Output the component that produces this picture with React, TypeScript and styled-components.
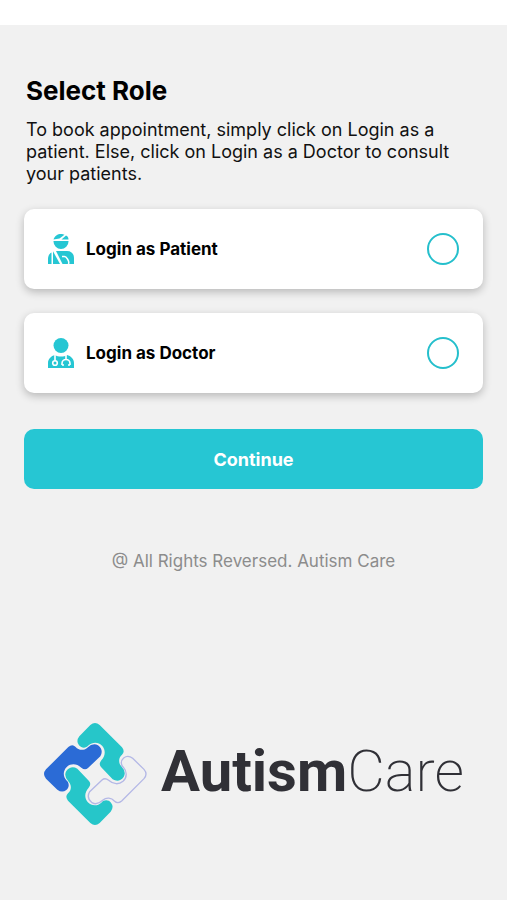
import React, { useState } from "react";
import styled, { createGlobalStyle } from "styled-components";

const GlobalStyle = createGlobalStyle`
  * { box-sizing: border-box; }
  body {
    margin: 0;
    background: #f1f1f1;
    color: #000;
    font-family: Inter, "Liberation Sans", sans-serif;
  }
`;

const StatusStrip = styled.div`
  height: 25px;
  background: #fff;
`;

const Screen = styled.main`
  display: flex;
  flex-direction: column;
  padding: 48px 24px;
`;

const Title = styled.h1`
  margin: 0;
  padding: 0 2px;
  font-size: 26px;
  line-height: 36px;
  font-weight: 700;
`;

const Intro = styled.p`
  margin: 10px 0 24px;
  padding: 0 24px 0 2px;
  font-size: 18px;
  line-height: 22px;
  color: #111;
`;

const RoleList = styled.form`
  display: flex;
  flex-direction: column;
  gap: 24px;
`;

const RoleCard = styled.label`
  display: flex;
  align-items: center;
  gap: 12px;
  height: 80px;
  padding: 0 24px;
  border-radius: 10px;
  background: #fff;
  box-shadow: 0 3px 8px rgba(0, 0, 0, 0.24);
  cursor: pointer;
`;

const RoleName = styled.span`
  flex: 1;
  font-size: 17px;
  line-height: 24px;
  font-weight: 700;
`;

const Radio = styled.input`
  appearance: none;
  width: 32px;
  height: 32px;
  margin: 0;
  border: 2px solid #25bfcc;
  border-radius: 50%;
  &:checked {
    background: #26c6d3;
    box-shadow: inset 0 0 0 5px #fff;
  }
`;

const ContinueButton = styled.button`
  height: 60px;
  margin-top: 12px;
  border: 0;
  border-radius: 10px;
  background: #26c6d3;
  color: #fff;
  font: inherit;
  font-size: 18px;
  font-weight: 700;
`;

const Rights = styled.p`
  margin: 60px 0 0;
  text-align: center;
  font-size: 17px;
  line-height: 24px;
  color: #8c8c8c;
`;

const Brand = styled.footer`
  display: flex;
  align-items: center;
  justify-content: center;
  gap: 14px;
  margin-top: 149px;
`;

const Wordmark = styled.span`
  padding-bottom: 6px;
  font-family: Roboto, "Liberation Sans", sans-serif;
  font-size: 58px;
  line-height: 72px;
  font-weight: 700;
  color: #303036;
`;

const WordmarkLight = styled.span`
  font-weight: 200;
`;

function PatientIcon() {
  return (
    <svg width="26" height="30" viewBox="0 0 26 30" fill="#26c6d3" aria-hidden="true">
      <path d="M5.500 5.500C6.500 2 9.500 0 13 0c1.500 0 2.500.3 3.500.7L11.500 4.500z" />
      <path d="M18 1.500C20 2.500 20.500 4 20.500 5.500h-7z" />
      <path d="M5.500 7h15v.5a7.500 7.500 0 0 1-15 0z" />
      <path d="M3.500 18.500V30H0v-5c0-3 1.300-5.500 3.500-6.500z" />
      <path d="M5 17.300L12 30H5z" />
      <path d="M8 17h11c4.500 0 7 3 7 7v6H14.500z" />
      <path d="M14 22.500h2.500c2 0 2.500 2 3.500 3.500 1 1.500 1 2.500.5 4" fill="none" stroke="#fff" strokeWidth="1.500" />
    </svg>
  );
}

function DoctorIcon() {
  return (
    <svg width="26" height="30" viewBox="0 0 26 30" fill="#26c6d3" aria-hidden="true">
      <circle cx="13" cy="7.500" r="7.500" />
      <path d="M7 17c3 2 9 2 12 0 4 1 7 4 7 8v5H0v-5c0-4 3-7 7-8z" />
      <path
        d="M7 17v6M18 17v4.500M14 27v-1.500a4 4 0 0 1 8 0V27M14 27h2M20 27h2"
        fill="none"
        stroke="#fff"
        strokeWidth="1.600"
      />
      <circle cx="7" cy="25" r="2.300" stroke="#fff" strokeWidth="1.600" />
    </svg>
  );
}

const PIECE =
  "M161 31Q175 19 189 31L256 98Q266 110 256 120C246 128 244 144 254 155Q270 172 261 187Q247 205 228 194L193 157Q185 148 194 137C207 123 207 106 197 94C185 81 167 82 156 92C148 101 136 102 127 92Q117 79 128 65Z";

function BrandMark() {
  return (
    <svg width="104" height="104" viewBox="19 22 312 312" role="img" aria-label="Puzzle logo">
      <path d={PIECE} fill="#26c6c9" />
      <path d={PIECE} fill="#2b6bd6" transform="rotate(-90 175 178)" />
      <path d={PIECE} fill="#26c6c9" transform="rotate(180 175 178)" />
      <path d={PIECE} fill="none" stroke="#b4b8e6" strokeWidth="4" transform="rotate(90 175 178)" />
    </svg>
  );
}

const ROLES = [
  { id: "patient", label: "Login as Patient", Icon: PatientIcon },
  { id: "doctor", label: "Login as Doctor", Icon: DoctorIcon },
];

export default function App() {
  const [role, setRole] = useState("");
  return (
    <>
      <GlobalStyle />
      <StatusStrip />
      <Screen>
        <Title>Select Role</Title>
        <Intro>
          To book appointment, simply click on Login as a patient. Else, click on Login as a Doctor to
          consult your patients.
        </Intro>
        <RoleList onSubmit={(event) => event.preventDefault()}>
          {ROLES.map(({ id, label, Icon }) => (
            <RoleCard key={id} htmlFor={id}>
              <Icon />
              <RoleName>{label}</RoleName>
              <Radio
                type="radio"
                name="role"
                id={id}
                checked={role === id}
                onChange={() => setRole(id)}
              />
            </RoleCard>
          ))}
          <ContinueButton type="submit">Continue</ContinueButton>
        </RoleList>
        <Rights>@ All Rights Reversed. Autism Care</Rights>
        <Brand>
          <BrandMark />
          <Wordmark>
            Autism<WordmarkLight>Care</WordmarkLight>
          </Wordmark>
        </Brand>
      </Screen>
    </>
  );
}
